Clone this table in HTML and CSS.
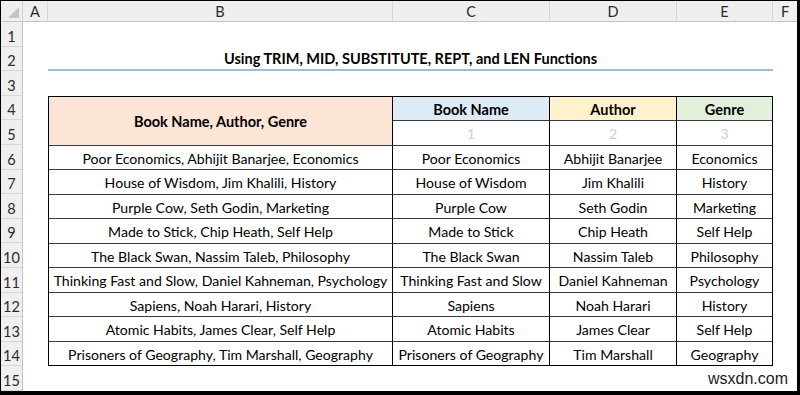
FILE: index.html
```html
<!DOCTYPE html>
<html>
<head>
<meta charset="utf-8">
<link rel="stylesheet" href="styles.css">
</head>
<body>
<div class="frame">
  <div class="sheet">
    <div class="corner"><svg class="tri" width="11" height="11" viewBox="0 0 11 11"><polygon points="11,0 11,11 0,11" fill="#c4c4c4"/></svg></div>
    <div class="colhdr">A</div>
    <div class="colhdr">B</div>
    <div class="colhdr">C</div>
    <div class="colhdr">D</div>
    <div class="colhdr">E</div>
    <div class="colhdr last">F</div>

    <div class="rowhdrs">
      <div class="rh">1</div><div class="rh">2</div><div class="rh">3</div><div class="rh">4</div><div class="rh">5</div>
      <div class="rh">6</div><div class="rh">7</div><div class="rh">8</div><div class="rh">9</div><div class="rh">10</div>
      <div class="rh">11</div><div class="rh">12</div><div class="rh">13</div><div class="rh">14</div><div class="rh">15</div>
    </div>

    <div class="title">Using TRIM, MID, SUBSTITUTE, REPT, and LEN Functions</div>

    <div class="tbl">
      <div class="c hd peach merged">Book Name, Author, Genre</div>
      <div class="c hd blue">Book Name</div>
      <div class="c hd yellow">Author</div>
      <div class="c hd green">Genre</div>
      <div class="c num">1</div>
      <div class="c num">2</div>
      <div class="c num">3</div>

      <div class="c">Poor Economics, Abhijit Banarjee, Economics</div><div class="c">Poor Economics</div><div class="c">Abhijit Banarjee</div><div class="c">Economics</div>
      <div class="c">House of Wisdom, Jim Khalili, History</div><div class="c">House of Wisdom</div><div class="c">Jim Khalili</div><div class="c">History</div>
      <div class="c">Purple Cow, Seth Godin, Marketing</div><div class="c">Purple Cow</div><div class="c">Seth Godin</div><div class="c">Marketing</div>
      <div class="c">Made to Stick, Chip Heath, Self Help</div><div class="c">Made to Stick</div><div class="c">Chip Heath</div><div class="c">Self Help</div>
      <div class="c">The Black Swan, Nassim Taleb, Philosophy</div><div class="c">The Black Swan</div><div class="c">Nassim Taleb</div><div class="c">Philosophy</div>
      <div class="c">Thinking Fast and Slow, Daniel Kahneman, Psychology</div><div class="c">Thinking Fast and Slow</div><div class="c">Daniel Kahneman</div><div class="c">Psychology</div>
      <div class="c">Sapiens, Noah Harari, History</div><div class="c">Sapiens</div><div class="c">Noah Harari</div><div class="c">History</div>
      <div class="c">Atomic Habits, James Clear, Self Help</div><div class="c">Atomic Habits</div><div class="c">James Clear</div><div class="c">Self Help</div>
      <div class="c">Prisoners of Geography, Tim Marshall, Geography</div><div class="c">Prisoners of Geography</div><div class="c">Tim Marshall</div><div class="c">Geography</div>
    </div>

    <div class="mark">wsxdn.com</div>
  </div>
</div>
</body>
</html>
```

FILE: styles.css
```css
* { box-sizing: border-box; }
html, body { margin: 0; padding: 0; background: #000; }
.frame {
  width: 800px;
  height: 395px;
  border-left: 1px solid #000;
  border-top: 1px solid #000;
  border-right: 3px solid #000;
  border-bottom: 4px solid #000;
  background: #fff;
}
.sheet {
  position: relative;
  display: grid;
  grid-template-columns: 22px 25px 345px 157px 127px 96px 24px;
  grid-template-rows: 21px repeat(15, 24.6px);
  width: 796px;
  height: 390px;
  background: #fff;
  font-family: Lato, "Open Sans", sans-serif;
  color: #000;
}
.corner {
  background: #efefef;
  border-right: 1px solid #d0d0d0;
  border-bottom: 1px solid #c3c3c3;
  display: flex;
  align-items: flex-end;
  justify-content: flex-end;
  padding: 0 3px 3px 0;
}
.tri { display: block; }
.colhdr {
  background: #efefef;
  border-right: 1px solid #d6d6d6;
  border-bottom: 1px solid #c3c3c3;
  font-size: 14.5px;
  color: #2b2b2b;
  display: flex;
  align-items: flex-end;
  justify-content: center;
  padding-bottom: 1px;
}
.colhdr.last { border-right: none; }
.rowhdrs {
  grid-column: 1;
  grid-row: 2 / 17;
  display: grid;
  grid-template-rows: repeat(15, 24.6px);
  background: #efefef;
  border-right: 1px solid #c3c3c3;
}
.rh {
  border-bottom: 1px solid #d6d6d6;
  font-size: 14.5px;
  color: #2b2b2b;
  display: flex;
  align-items: flex-end;
  justify-content: center;
  padding-bottom: 1px;
}
.title {
  grid-column: 3 / 7;
  grid-row: 3;
  border-bottom: 2px solid #9fbcd9;
  font-weight: bold;
  font-size: 14.5px;
  display: flex;
  align-items: center;
  justify-content: center;
  padding-top: 2px;
}
.tbl {
  grid-column: 3 / 7;
  grid-row: 5 / 16;
  display: grid;
  grid-template-columns: 344px 157px 127px 96px;
  grid-template-rows: repeat(11, 1fr);
  border-left: 1px solid #000;
  border-top: 1px solid #000;
}
.c {
  border-right: 1px solid #000;
  border-bottom: 1px solid #3c3c3c;
  font-size: 14.1px;
  display: flex;
  align-items: center;
  justify-content: center;
  white-space: nowrap;
  padding-top: 1px;
}
.c:nth-last-child(-n+4) { border-bottom-color: #000; }
.hd { font-weight: bold; font-size: 14.5px; }
.merged { grid-row: span 2; }
.peach { background: #fce4d6; }
.blue { background: #ddebf7; }
.yellow { background: #fff2cc; }
.green { background: #e2efda; }
.num { color: #d0d0d0; }
.mark {
  position: absolute;
  right: 9px;
  bottom: 3px;
  font-family: "Liberation Sans", Arial, sans-serif;
  font-size: 16px;
  color: #1a1a1a;
}
```
